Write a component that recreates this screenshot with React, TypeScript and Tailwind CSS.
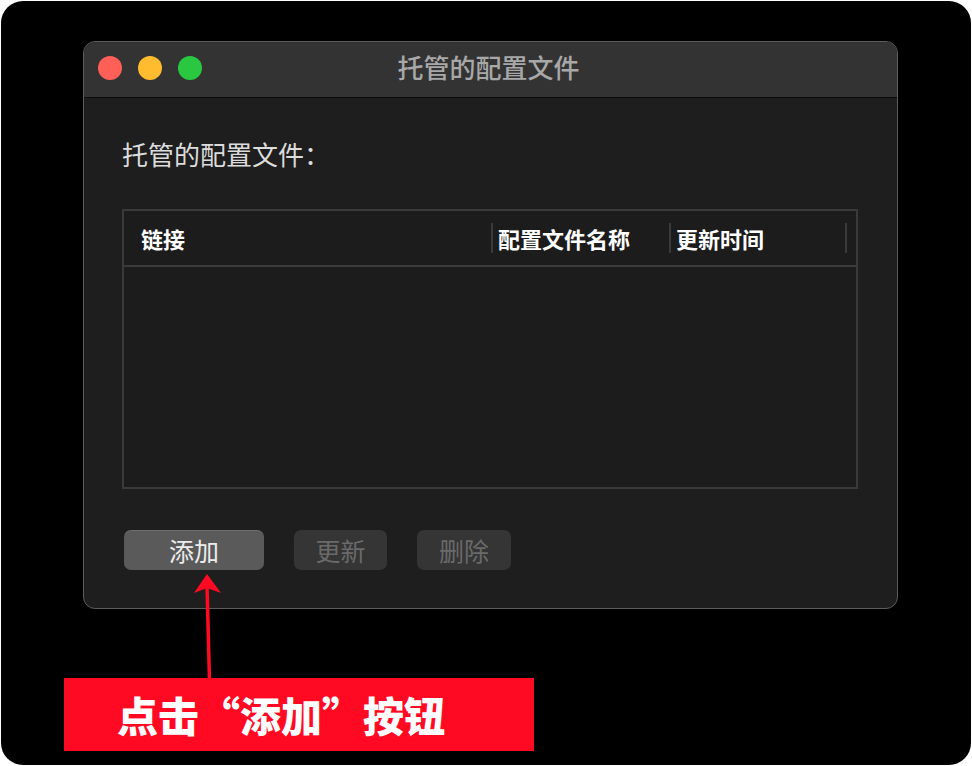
import React from "react";

const font = { fontFamily: '"Noto Sans CJK SC", "Noto Sans", sans-serif' };

export default function App() {
  return (
    <div className="w-[972px] h-[766px] bg-white p-px" style={font}>
      <div className="relative w-[970px] h-[764px] bg-black rounded-[22px] overflow-hidden">
        {/* Window */}
        <div className="ml-[82px] mt-[40px] w-[815px] h-[568px] rounded-[12px] border border-[#5c5c5c] bg-[#1e1e1e] overflow-hidden flex flex-col">
          <div className="h-[56px] bg-[#333333] border-b border-[#0a0a0a] grid grid-cols-[1fr_auto_1fr] items-start">
            <div className="flex items-center gap-[16px] pl-[14px] pt-[14px]">
              <span className="w-[24px] h-[24px] rounded-full bg-[#fe5f57]" />
              <span className="w-[24px] h-[24px] rounded-full bg-[#febc2e]" />
              <span className="w-[24px] h-[24px] rounded-full bg-[#2ac840]" />
            </div>
            <div className="pt-[10px] text-[26px] leading-[30px] font-medium text-[#a8a8a8] -ml-[4px]">托管的配置文件</div>
            <div />
          </div>
          <div className="flex-1 pl-[38px] pr-[39px] pt-[41px]">
            <div className="h-[30px] leading-[30px] text-[26px] text-[#dcdcdc]">托管的配置文件：</div>
            <div className="mt-[40px] h-[280px] border-2 border-[#3a3a3a] bg-[#1c1c1c]">
              <div className="h-[56px] border-b-2 border-[#3a3a3a] flex items-center text-[22px] font-bold text-white">
                <div className="w-[367px] pl-[17px] leading-[30px]">链接</div>
                <div className="w-[2px] h-[30px] bg-[#3a3a3a]" />
                <div className="w-[176px] pl-[5px] leading-[30px]">配置文件名称</div>
                <div className="w-[2px] h-[30px] bg-[#3a3a3a]" />
                <div className="w-[174px] pl-[5px] leading-[30px]">更新时间</div>
                <div className="w-[2px] h-[30px] bg-[#3a3a3a]" />
              </div>
            </div>
            <div className="mt-[41px] ml-[2px] flex gap-[30px]">
              <button className="w-[140px] h-[40px] rounded-[7px] bg-[#5a5a5a] text-[25px] leading-[40px] text-[#ececec] shadow-[inset_0_1px_0_rgba(255,255,255,0.12)]">添加</button>
              <button className="w-[93px] h-[40px] rounded-[7px] bg-[#353535] text-[25px] leading-[40px] text-[#6a6a6a]">更新</button>
              <button className="w-[94px] h-[40px] rounded-[7px] bg-[#353535] text-[25px] leading-[40px] text-[#6a6a6a]">删除</button>
            </div>
          </div>
        </div>

        {/* Arrow annotation */}
        <svg className="absolute left-[188px] top-[570px]" width="40" height="112" viewBox="0 0 40 112">
          <polygon points="18,3 5,22 18,17 32,22" fill="#ff0a22" />
          <line x1="18" y1="14" x2="20.5" y2="110" stroke="#ff0a22" strokeWidth="3.5" />
        </svg>

        {/* Red callout */}
        <div className="mt-[69px] ml-[63px] w-[470px] h-[73px] bg-[#ff0a22] flex items-center pl-[53px]">
          <span className="text-[41px] font-black text-white leading-none">点击“添加”按钮</span>
        </div>
      </div>
    </div>
  );
}
